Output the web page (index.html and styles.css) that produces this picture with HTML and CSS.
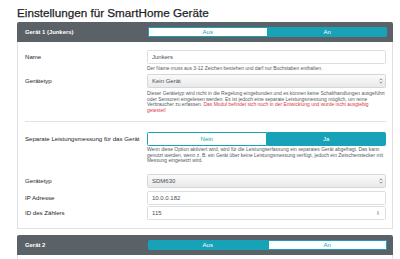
FILE: index.html
```html
<!DOCTYPE html>
<html lang="de">
<head>
    <meta charset="UTF-8">
    <meta name="viewport" content="width=device-width, initial-scale=1.0">
    <title>Einstellungen für SmartHome Geräte</title>
    <link rel="stylesheet" href="styles.css">
</head>
<body>
    <div class="container">
        <h1>Einstellungen für SmartHome Geräte</h1>

        <div class="card">
            <div class="card-header">
                <span class="card-title">Gerät 1 (Junkers)</span>
                <div class="toggle toggle-sm">
                    <button>Aus</button>
                    <button class="active">An</button>
                </div>
            </div>
            <div class="card-body">
                <div class="form-row row-name">
                    <label for="name1">Name</label>
                    <div class="control">
                        <input type="text" id="name1" value="Junkers">
                        <small class="help">Der Name muss aus 3-12 Zeichen bestehen und darf nur Buchstaben enthalten.</small>
                    </div>
                </div>
                <div class="form-row">
                    <label for="type1">Gerätetyp</label>
                    <div class="control">
                        <div class="select-wrap">
                            <select id="type1"><option>Kein Gerät</option></select>
                            <svg class="select-arrow" width="4" height="6" viewBox="0 0 4 6"><path d="M0.5 2.3 L2 0.8 L3.5 2.3 M0.5 3.7 L2 5.2 L3.5 3.7" fill="none" stroke="#666" stroke-width="0.7"/></svg>
                        </div>
                        <small class="help desc">Dieser Gerätetyp wird nicht in die Regelung eingebunden und es können keine Schalthandlungen ausgeführt oder Sensoren eingelesen werden. Es ist jedoch eine separate Leistungsmessung möglich, um reine Verbraucher zu erfassen. <span class="danger">Das Modul befindet sich noch in der Entwicklung und wurde nicht ausgiebig getestet!</span></small>
                    </div>
                </div>

                <hr>

                <div class="form-row row-separate">
                    <label>Separate Leistungsmessung für das Gerät</label>
                    <div class="control">
                        <div class="toggle">
                            <button>Nein</button>
                            <button class="active">Ja</button>
                        </div>
                        <small class="help">Wenn diese Option aktiviert wird, wird für die Leistungserfassung ein separates Gerät abgefragt. Das kann genutzt werden, wenn z. B. ein Gerät über keine Leistungsmessung verfügt, jedoch ein Zwischenstecker mit Messung eingesetzt wird.</small>
                    </div>
                </div>
                <div class="form-row row-meter">
                    <label for="type2">Gerätetyp</label>
                    <div class="control">
                        <div class="select-wrap">
                            <select id="type2"><option>SDM630</option></select>
                            <svg class="select-arrow" width="4" height="6" viewBox="0 0 4 6"><path d="M0.5 2.3 L2 0.8 L3.5 2.3 M0.5 3.7 L2 5.2 L3.5 3.7" fill="none" stroke="#666" stroke-width="0.7"/></svg>
                        </div>
                    </div>
                </div>
                <div class="form-row row-ip">
                    <label for="ip1">IP Adresse</label>
                    <div class="control">
                        <input type="text" id="ip1" value="10.0.0.182">
                    </div>
                </div>
                <div class="form-row row-last">
                    <label for="id1">ID des Zählers</label>
                    <div class="control">
                        <div class="select-wrap">
                            <input type="text" id="id1" value="115">
                            <svg class="spin" width="4" height="6" viewBox="0 0 4 6"><path d="M0.6 2.4 L2 1 L3.4 2.4 Z M0.6 3.6 L2 5 L3.4 3.6 Z" fill="#999"/></svg>
                        </div>
                    </div>
                </div>
            </div>
        </div>

        <div class="card">
            <div class="card-header">
                <span class="card-title">Gerät 2</span>
                <div class="toggle toggle-sm">
                    <button class="active">Aus</button>
                    <button>An</button>
                </div>
            </div>
            <div class="card-body"></div>
        </div>
    </div>
</body>
</html>
```

FILE: styles.css
```css
html, body {
    overflow: hidden;
}

body {
    margin: 0;
    font-family: "Liberation Sans", Arial, sans-serif;
    color: #212529;
    background-color: #fff;
}

.container {
    width: 376px;
    padding: 6px 0 0 17px;
}

h1 {
    margin: 0 0 2px 0;
    font-size: 11.7px;
    font-weight: 500;
    line-height: 14px;
    -webkit-text-stroke: 0.25px #212529;
}

.card {
    margin-bottom: 5.5px;
}

.card-header {
    display: grid;
    grid-template-columns: 123px 1fr;
    align-items: center;
    height: 20px;
    box-sizing: border-box;
    padding: 5px 6px 5px 8px;
    background-color: #5a6268;
    border-radius: 2px 2px 0 0;
}

.card-title {
    color: #fff;
    font-size: 5.9px;
    font-weight: bold;
}

.card-body {
    border: 1px solid #e0e0e0;
    border-top: none;
    padding: 8px 6px 8px 7px;
}

.form-row {
    display: grid;
    grid-template-columns: 122px 1fr;
    align-items: start;
}

.form-row label {
    font-size: 6.1px;
    line-height: 14px;
}

.row-name {
    margin-bottom: 2.4px;
}

.row-separate {
    margin-bottom: 10px;
}

.row-meter {
    margin-bottom: 3px;
}

.row-ip {
    margin-bottom: 1.5px;
}

.toggle {
    display: flex;
    height: 14px;
}

.toggle-sm {
    height: 10px;
}

.toggle button {
    flex: 1;
    margin: 0;
    padding: 0;
    border: 1px solid #17a2b8;
    background-color: #fff;
    color: #17a2b8;
    font-family: inherit;
    font-size: 6px;
}

.toggle button:first-child {
    border-radius: 1.5px 0 0 1.5px;
}

.toggle button:last-child {
    border-radius: 0 1.5px 1.5px 0;
}

.toggle button.active {
    background-color: #17a2b8;
    color: #fff;
}

input, select {
    display: block;
    width: 100%;
    height: 14px;
    box-sizing: border-box;
    margin: 0;
    padding: 0 4px;
    border: 1px solid #dcdfe2;
    border-radius: 1.5px;
    background-color: #fff;
    color: #495057;
    font-family: inherit;
    font-size: 6px;
    outline: none;
}

select {
    appearance: none;
    -webkit-appearance: none;
    background: linear-gradient(#fafafa, #e9e9e9);
    border-color: #d6d6d6;
}

.select-wrap {
    position: relative;
}

.select-arrow {
    position: absolute;
    right: 3px;
    top: 4px;
}

.spin {
    position: absolute;
    right: 6px;
    top: 4px;
}

.help {
    display: block;
    margin-top: 2px;
    font-size: 4.95px;
    line-height: 5.6px;
    color: #555a5f;
}

.desc {
    margin-top: 3px;
}

.row-separate .help {
    margin-top: 1px;
}

.danger {
    color: #dc3545;
}

hr {
    margin: 7.6px 0 10px 0;
    border: 0;
    border-top: 1px solid #e2e2e2;
}
```
